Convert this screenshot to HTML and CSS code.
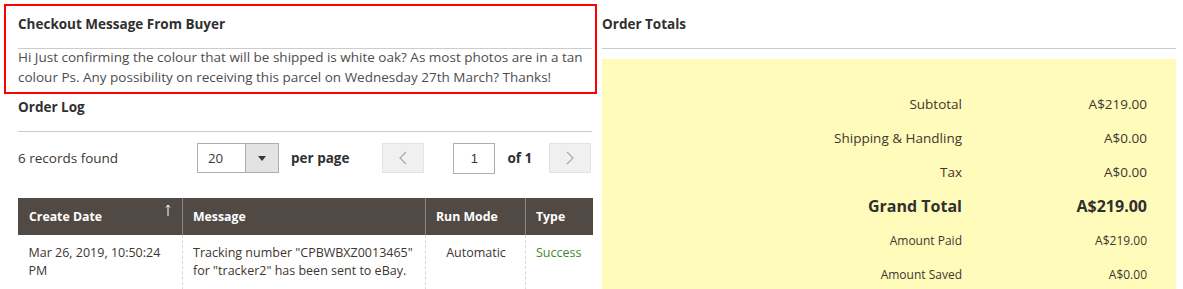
FILE: index.html
```html
<!DOCTYPE html>
<html lang="en">
<head>
<meta charset="utf-8">
<title>Order View</title>
<link rel="stylesheet" href="styles.css">
</head>
<body>
<div class="page">
  <div class="col">
    <section class="block checkout">
      <h3 class="block-title">Checkout Message From Buyer</h3>
      <p class="msg">Hi Just confirming the colour that will be shipped is white oak? As most photos are in a tan colour Ps. Any possibility on receiving this parcel on Wednesday 27th March? Thanks!</p>
    </section>
    <section class="block log">
      <h3 class="block-title title-tight">Order Log</h3>
      <div class="toolbar">
        <div class="records">6 records found</div>
        <div class="select">
          <span class="select-val">20</span>
          <span class="select-btn"><svg width="8" height="5" viewBox="0 0 8 5"><path d="M0 0h8L4 5z" fill="#41362f"/></svg></span>
        </div>
        <span class="per-page">per page</span>
        <span class="pager-btn prev"><svg width="8" height="14" viewBox="0 0 8 14"><path d="M7 1L1 7l6 6" fill="none" stroke="#aaa" stroke-width="1.2"/></svg></span>
        <span class="page-input">1</span>
        <span class="of">of 1</span>
        <span class="pager-btn next"><svg width="8" height="14" viewBox="0 0 8 14"><path d="M1 1l6 6-6 6" fill="none" stroke="#aaa" stroke-width="1.2"/></svg></span>
      </div>
      <table class="grid">
        <colgroup>
          <col class="c-date"><col class="c-msg"><col class="c-mode"><col class="c-type">
        </colgroup>
        <thead>
          <tr>
            <th class="sortable">Create Date<svg class="sort-icon" width="6" height="12" viewBox="0 0 6 12"><path d="M3 12V1M1 3.5L3 1l2 2.5" fill="none" stroke="#fff" stroke-width="1"/></svg></th>
            <th>Message</th>
            <th>Run Mode</th>
            <th>Type</th>
          </tr>
        </thead>
        <tbody>
          <tr>
            <td>Mar 26, 2019, 10:50:24 PM</td>
            <td>Tracking number "CPBWBXZ0013465" for "tracker2" has been sent to eBay.</td>
            <td class="center">Automatic</td>
            <td class="success">Success</td>
          </tr>
        </tbody>
      </table>
    </section>
  </div>
  <div class="col">
    <section class="block">
      <h3 class="block-title">Order Totals</h3>
      <div class="totals">
        <div class="t-row"><span>Subtotal</span><span>A$219.00</span></div>
        <div class="t-row"><span>Shipping &amp; Handling</span><span>A$0.00</span></div>
        <div class="t-row"><span>Tax</span><span>A$0.00</span></div>
        <div class="t-row grand"><span>Grand Total</span><span>A$219.00</span></div>
        <div class="t-row small"><span>Amount Paid</span><span>A$219.00</span></div>
        <div class="t-row small"><span>Amount Saved</span><span>A$0.00</span></div>
      </div>
    </section>
  </div>
</div>
</body>
</html>
```

FILE: styles.css
```css
* { box-sizing: border-box; }
html, body {
  margin: 0;
  padding: 0;
  background: #fff;
}
body {
  font-family: "Open Sans", "Liberation Sans", sans-serif;
  font-size: 13px;
  color: #41362f;
  overflow: hidden;
}
.page {
  display: grid;
  grid-template-columns: 574px 574px;
  column-gap: 10px;
  padding-left: 18px;
}
.block-title {
  margin: 0;
  height: 49px;
  padding-top: 14px;
  line-height: 20px;
  font-size: 13.5px;
  font-weight: 700;
  color: #303030;
  border-bottom: 1px solid #cccccc;
  white-space: nowrap;
}
.title-tight {
  height: 45px;
  padding-top: 10px;
}
.checkout {
  position: relative;
}
.checkout::before {
  content: "";
  position: absolute;
  left: -14px;
  top: 4px;
  width: 589px;
  height: 86px;
  border: 2px solid #ff0000;
  pointer-events: none;
}
.msg {
  margin: -2px 0 0;
  line-height: 20px;
  font-size: 13.5px;
  color: #4d4d4d;
}
.toolbar {
  display: flex;
  align-items: center;
  margin-top: 11px;
  height: 30px;
  white-space: nowrap;
}
.toolbar > * { flex-shrink: 0; }
.records {
  width: 179px;
  font-size: 13.5px;
  color: #41362f;
}
.select {
  display: flex;
  width: 82px;
  height: 30px;
  border: 1px solid #adadad;
}
.select-val {
  flex: 1;
  padding-left: 10px;
  line-height: 28px;
  font-size: 13.3px;
}
.select-btn {
  width: 33px;
  background: #e3e3e3;
  border-left: 1px solid #adadad;
  display: flex;
  align-items: center;
  justify-content: center;
}
.per-page {
  margin-left: 12px;
  font-weight: 700;
  font-size: 13.5px;
  color: #303030;
}
.pager-btn {
  width: 42px;
  height: 30px;
  background: #f0f0f0;
  border: 1px solid #e3e3e3;
  display: flex;
  align-items: center;
  justify-content: center;
}
.prev { margin-left: 33px; }
.next { margin-left: 17px; }
.page-input {
  margin-left: 29px;
  width: 42px;
  height: 31px;
  border: 1px solid #adadad;
  text-align: center;
  line-height: 29px;
  font-family: "Liberation Sans", sans-serif;
  font-size: 13px;
  color: #41362f;
}
.of {
  margin-left: 12px;
  font-weight: 700;
  font-size: 13.5px;
  color: #303030;
}
.grid {
  margin-top: 25px;
  width: 574px;
  border-collapse: collapse;
  table-layout: fixed;
}
.c-date { width: 164px; }
.c-msg { width: 243px; }
.c-mode { width: 100px; }
.c-type { width: 67px; }
.grid th {
  background: #514943;
  color: #fff;
  font-weight: 700;
  font-size: 12.3px;
  text-align: left;
  height: 37px;
  padding: 0 10px;
  border-left: 1px solid #8a837f;
  border-right: 1px solid #8a837f;
  white-space: nowrap;
}
.grid th:first-child { border-left-color: #514943; }
.grid th:last-child { border-right-color: #514943; }
.sortable { position: relative; }
.sort-icon {
  position: absolute;
  right: 11px;
  top: 6px;
}
.grid td {
  vertical-align: top;
  padding: 9px 9px 0 10px;
  height: 55px;
  line-height: 18px;
  font-size: 12.5px;
  color: #41362f;
  border-left: 1px dashed #d6d6d6;
}
.grid td:first-child { border-left: none; }
.grid td.center { text-align: center; }
.grid td.success { color: #3e8a2a; }
.totals {
  margin-top: 10px;
  background: #fffbbb;
  height: 240px;
  padding: 28px 29px 0 0;
}
.t-row {
  display: grid;
  grid-template-columns: 1fr 185px;
  height: 34px;
  align-items: center;
  text-align: right;
  font-size: 13.5px;
  color: #41362f;
}
.t-row.grand {
  font-size: 16px;
  font-weight: 700;
  color: #303030;
}
.t-row.small {
  font-size: 12px;
}
```
